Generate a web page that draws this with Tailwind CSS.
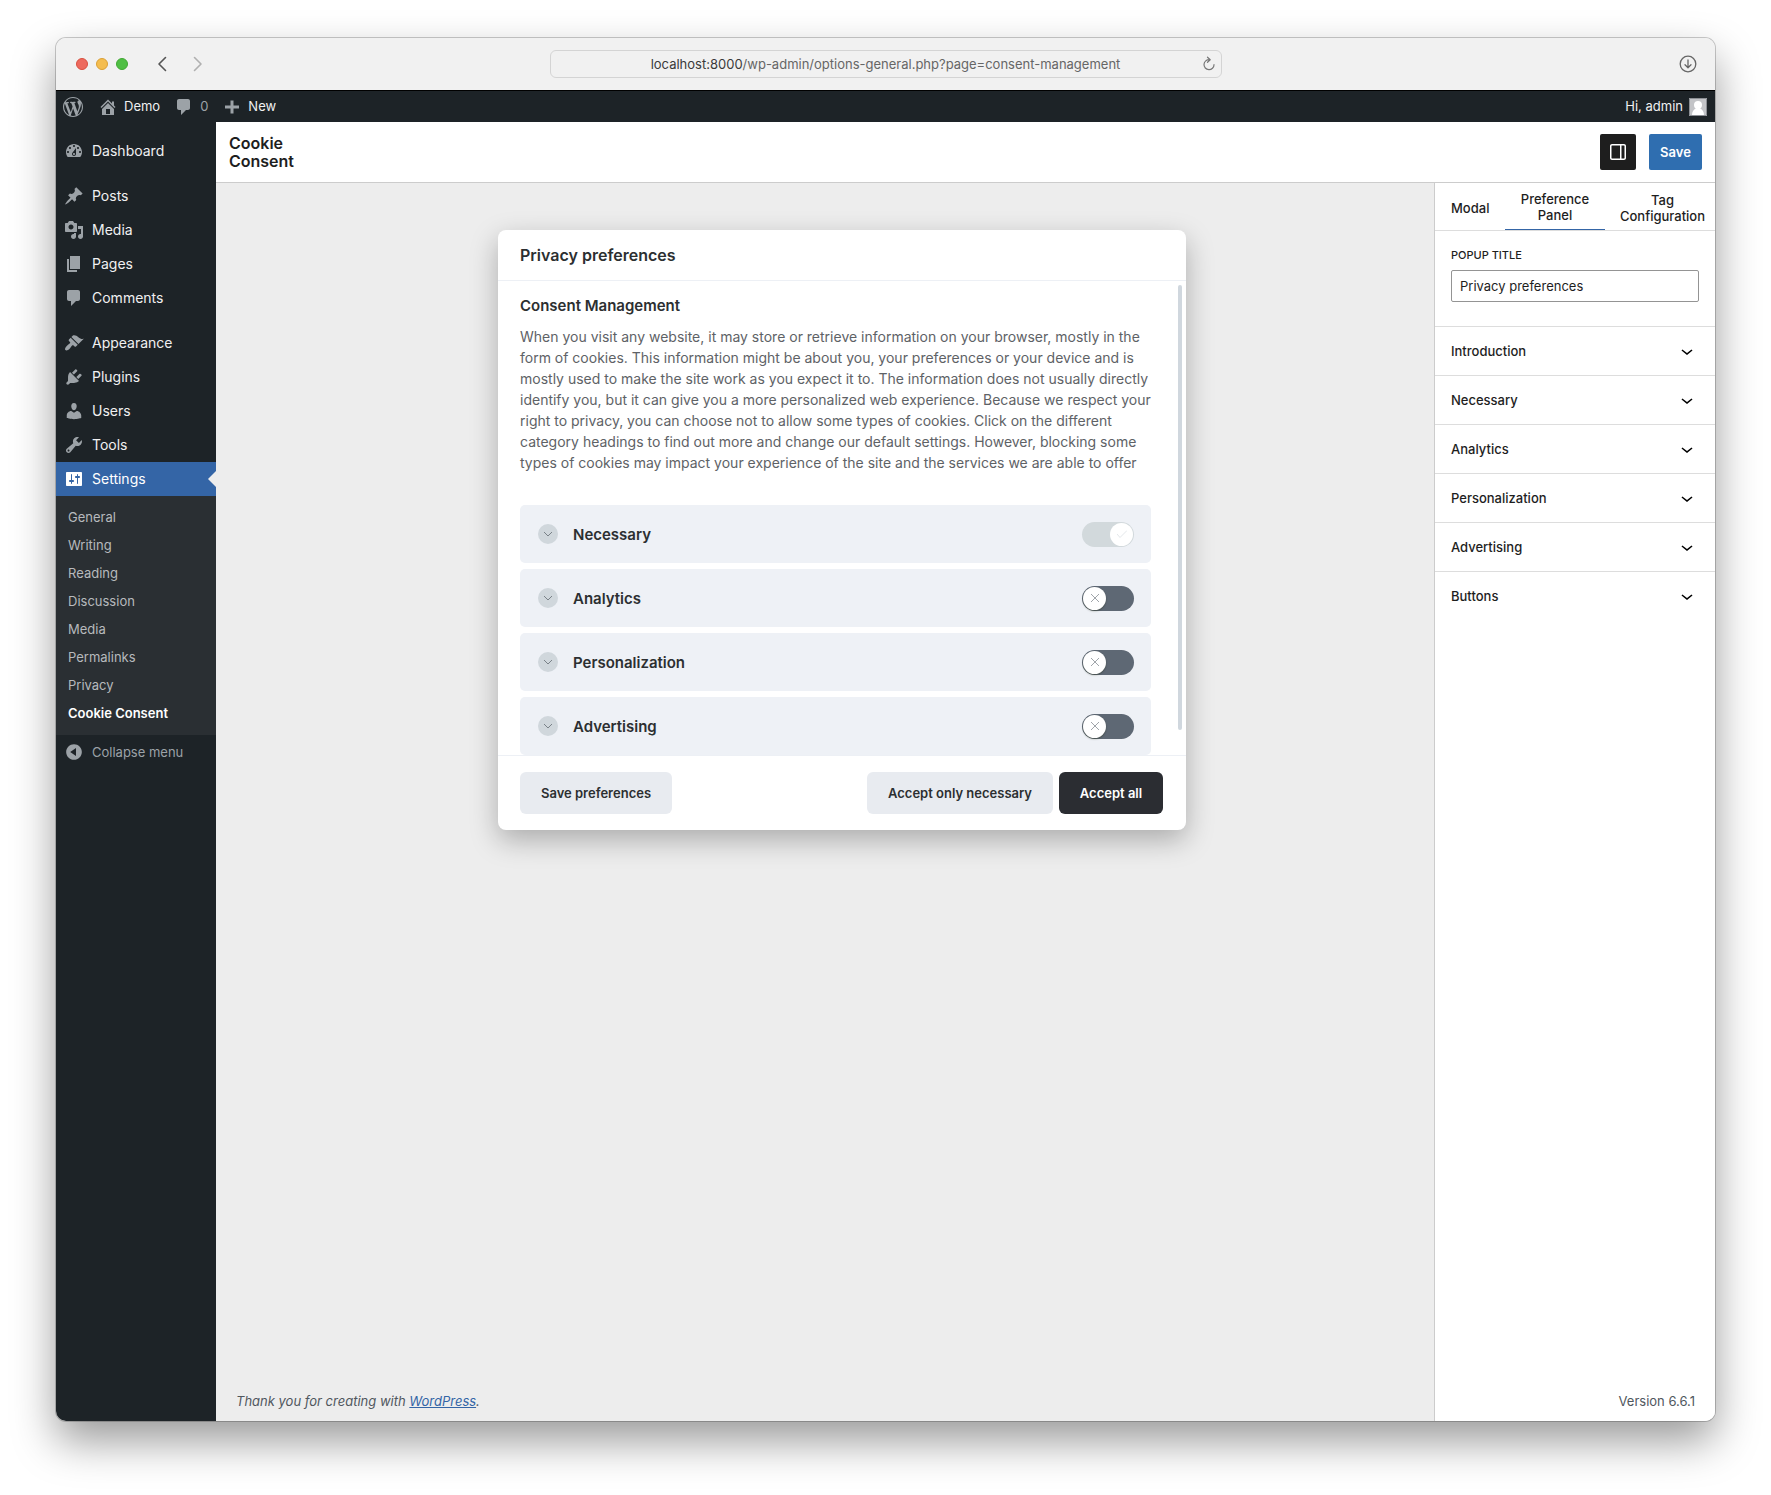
<!DOCTYPE html>
<html lang="en">
<head>
<meta charset="utf-8">
<meta name="viewport" content="width=device-width, initial-scale=1">
<title>Cookie Consent</title>
<script src="https://cdn.jsdelivr.net/npm/@tailwindcss/browser@4"></script>
</head>
<body class="bg-white font-[Inter,sans-serif] text-[13px] text-[#1e1e1e]">
<svg class="hidden" aria-hidden="true">
  <symbol id="chevron" viewBox="0 0 24 24"><path d="M17.5 11.6L12 16l-5.500-4.400.9-1.200L12 14l4.500-3.600 1 1.200z"/></symbol>
  <symbol id="comment" viewBox="0 0 20 20"><path d="M5 2h9c1.100 0 2 .9 2 2v7c0 1.100-.9 2-2 2h-2l-5 5v-5H5c-1.100 0-2-.9-2-2V4c0-1.100.9-2 2-2z"/></symbol>
  <symbol id="thin-chevron" viewBox="0 0 10 6"><path d="M1 1l4 4 4-4" fill="none" stroke="currentColor"/></symbol>
  <symbol id="cross" viewBox="0 0 10 10"><path d="M1 1l8 8M9 1l-8 8" fill="none" stroke="currentColor"/></symbol>
</svg>

<div class="flex min-h-screen flex-col px-14 pt-[38px] pb-[74px]">
<div class="flex grow flex-col overflow-hidden rounded-[10px] shadow-[0_0_0_1px_rgba(0,0,0,0.2),0_20px_44px_rgba(0,0,0,0.4)]">

  <!-- Browser toolbar -->
  <div class="grid h-[52px] grid-cols-[1fr_minmax(0,672px)_1fr] items-center bg-[#f1f1f1]">
    <div class="flex items-center pl-5">
      <div class="flex gap-2">
        <span class="size-3 rounded-full border border-[#d9503f] bg-[#ed6a5e]"></span>
        <span class="size-3 rounded-full border border-[#dba035] bg-[#f4bd4f]"></span>
        <span class="size-3 rounded-full border border-[#41a833] bg-[#4fbf44]"></span>
      </div>
      <button class="ml-7 text-[#555]" aria-label="Back"><svg class="h-4 w-3" viewBox="0 0 12 16" fill="none" stroke="currentColor" stroke-width="1.600" stroke-linecap="round" stroke-linejoin="round"><path d="M9.500 1.500L3 8l6.500 6.500" /></svg></button>
      <button class="ml-6 text-[#b0b0b0]" aria-label="Forward"><svg class="h-4 w-3" viewBox="0 0 12 16" fill="none" stroke="currentColor" stroke-width="1.600" stroke-linecap="round" stroke-linejoin="round"><path d="M2.500 1.500L9 8l-6.500 6.500"/></svg></button>
    </div>
    <div class="flex h-7 items-center rounded-md border border-[#d4d4d4] px-1">
      <p class="grow pt-0.5 pl-4 text-center text-[#666]"><span class="text-[#3a3a3a]">localhost:8000</span>/wp-admin/options-general.php?page=consent-management</p>
      <button class="text-[#777]" aria-label="Reload"><svg class="size-4" viewBox="0 0 16 16" fill="none" stroke="currentColor" stroke-width="1.200" stroke-linecap="round" stroke-linejoin="round"><path d="M8.500 3.700A5 5 0 1 0 13 8.700M6.500 1.200l2.700 2.600-2.700 2.500"/></svg></button>
    </div>
    <button class="mr-[18px] justify-self-end text-[#666]" aria-label="Downloads"><svg class="size-[18px]" viewBox="0 0 18 18" fill="none" stroke="currentColor" stroke-width="1.300" stroke-linecap="round" stroke-linejoin="round"><circle cx="9" cy="9" r="7.800"/><path d="M9 5v7.500M6 9.800l3 3 3-3"/></svg></button>
  </div>

  <!-- Admin bar -->
  <div class="flex h-8 items-center border-t border-black bg-[#1d2327] pr-2 text-[#f0f0f1]">
    <a href="#" class="ml-[7px] text-[#9ca2a7]" aria-label="WordPress"><svg class="size-5" viewBox="0 0 20 20" fill="currentColor"><path d="M20 10c0-5.510-4.490-10-10-10C4.480 0 0 4.490 0 10c0 5.520 4.480 10 10 10 5.510 0 10-4.480 10-10zM7.780 15.370L4.370 6.220c.55-.02 1.170-.08 1.170-.08.5-.06.44-1.130-.06-1.110 0 0-1.450.11-2.370.11-.18 0-.37 0-.58-.01C4.120 2.690 6.870 1.110 10 1.110c2.330 0 4.450.87 6.050 2.340-.68-.11-1.650.39-1.650 1.580 0 .74.45 1.360.9 2.100.35.61.55 1.360.55 2.460 0 1.490-1.400 5-1.400 5l-3.030-8.370c.54-.02.82-.17.82-.17.5-.05.44-1.250-.06-1.220 0 0-1.440.12-2.380.12-.87 0-2.330-.12-2.330-.12-.5-.03-.56 1.200-.06 1.220l.92.08 1.260 3.410zM17.410 10c.24-.64.74-1.870.43-4.250.7 1.290 1.050 2.710 1.050 4.250 0 3.290-1.730 6.240-4.400 7.780.97-2.590 1.940-5.200 2.920-7.780zM6.100 18.090C3.120 16.650 1.110 13.530 1.110 10c0-1.300.23-2.480.72-3.590C3.250 10.300 4.670 14.200 6.100 18.090zm4.030-6.630l2.580 6.980c-.86.29-1.760.45-2.710.45-.79 0-1.570-.11-2.290-.33.81-2.380 1.620-4.740 2.420-7.100z"/></svg></a>
    <a href="#" class="ml-[15px] flex items-center gap-1.5"><svg class="size-5 text-[#9ca2a7]" viewBox="0 0 20 20" fill="currentColor"><path d="M16 8.500l1.530 1.530-1.060 1.060L10 4.600l-6.470 6.490-1.060-1.060L10 2.500l4 4v-2h2v4zm-6-2.460l6 5.990V18H4v-5.970zM12 17v-5H8v5h4z"/></svg>Demo</a>
    <a href="#" class="ml-3.5 flex items-center gap-1.5 text-[#9ca2a7]"><svg class="size-5" fill="currentColor"><use href="#comment"/></svg>0</a>
    <a href="#" class="ml-3.5 flex items-center gap-1.5"><svg class="size-5 text-[#9ca2a7]" viewBox="0 0 20 20" fill="currentColor"><path d="M8.500 3.500h3v5H17v3h-5.500v5h-3v-5H3v-3h5.500z"/></svg>New</a>
    <a href="#" class="ml-auto flex items-center gap-1.5">Hi, admin<svg class="size-[18px]" viewBox="0 0 18 18"><path fill="#c3c4c7" d="M0 0h18v18H0z"/><path fill="#fff" d="M9 3a4 4 0 0 1 4 4c0 1.600-.8 3-1.800 3.600C13.500 11.500 15 14 15 17H3c0-3 1.500-5.500 3.800-6.400C5.800 10 5 8.600 5 7a4 4 0 0 1 4-4z"/><path fill="none" stroke="#8c8f94" d="M.5.5h17v17H.5z"/></svg></a>
  </div>

  <div class="flex grow bg-[#ededed]">
    <!-- Admin menu -->
    <nav class="w-40 shrink-0 bg-[#1d2327] pt-3 text-sm text-[#f0f0f1]" aria-label="Admin menu">
      <a href="#" class="flex h-[34px] items-center gap-2 pl-2"><svg class="size-5 text-[#9ca2a7]" viewBox="0 0 20 20" fill="currentColor"><path d="M3.760 16h12.480c1.100-1.370 1.760-3.110 1.760-5 0-4.420-3.580-8-8-8s-8 3.580-8 8c0 1.890.66 3.630 1.760 5zM10 4c.55 0 1 .45 1 1s-.45 1-1 1-1-.45-1-1 .45-1 1-1zM6 6c.55 0 1 .45 1 1s-.45 1-1 1-1-.45-1-1 .45-1 1-1zm8 0c.55 0 1 .45 1 1s-.45 1-1 1-1-.45-1-1 .45-1 1-1zm-5.370 5.550L12 7v6c0 1.100-.9 2-2 2s-2-.9-2-2c0-.57.24-1.080.63-1.450zM4 10c.55 0 1 .45 1 1s-.45 1-1 1-1-.45-1-1 .45-1 1-1zm12 0c.55 0 1 .45 1 1s-.45 1-1 1-1-.45-1-1 .45-1 1-1zm-5 3c0-.55-.45-1-1-1s-1 .45-1 1 .45 1 1 1 1-.45 1-1z"/></svg>Dashboard</a>
      <a href="#" class="mt-[11px] flex h-[34px] items-center gap-2 pl-2"><svg class="size-5 text-[#9ca2a7]" viewBox="0 0 20 20" fill="currentColor"><path d="M10.440 3.020l1.820-1.820 6.360 6.350-1.830 1.820c-1.050-.68-2.480-.57-3.410.36l-.75.75c-.92.93-1.040 2.350-.35 3.410l-1.830 1.820-2.410-2.410-2.800 2.790c-.42.42-3.380 2.710-3.800 2.290s1.860-3.390 2.280-3.810l2.790-2.790L4.100 9.360l1.830-1.820c1.050.69 2.480.57 3.400-.36l.75-.75c.93-.92 1.050-2.350.36-3.410z"/></svg>Posts</a>
      <a href="#" class="flex h-[34px] items-center gap-2 pl-2"><svg class="size-5 text-[#9ca2a7]" viewBox="0 0 20 20" fill="currentColor"><path d="M13 11V4c0-.55-.45-1-1-1h-1.670L9 1H5L3.670 3H2c-.55 0-1 .45-1 1v7c0 .55.45 1 1 1h10c.55 0 1-.45 1-1zM7 4.500c1.380 0 2.500 1.120 2.500 2.500S8.380 9.500 7 9.500 4.500 8.380 4.500 7 5.620 4.500 7 4.500zM14 6h5v10.500c0 1.380-1.120 2.500-2.500 2.500S14 17.880 14 16.500s1.120-2.500 2.500-2.500c.17 0 .34.02.5.05V9h-3V6zm-4 8.050V13h2v3.500c0 1.380-1.120 2.500-2.500 2.500S7 17.880 7 16.500 8.120 14 9.500 14c.17 0 .34.02.5.05z"/></svg>Media</a>
      <a href="#" class="flex h-[34px] items-center gap-2 pl-2"><svg class="size-5 text-[#9ca2a7]" viewBox="0 0 20 20" fill="currentColor"><path d="M6 15V2h10v13H6zm-1 1h8v2H3V5h2v11z"/></svg>Pages</a>
      <a href="#" class="flex h-[34px] items-center gap-2 pl-2"><svg class="size-5 text-[#9ca2a7]" fill="currentColor"><use href="#comment"/></svg>Comments</a>
      <a href="#" class="mt-[11px] flex h-[34px] items-center gap-2 pl-2"><svg class="size-5 text-[#9ca2a7]" viewBox="0 0 20 20" fill="currentColor"><path d="M14.480 11.060L7.410 3.990l1.500-1.500c.5-.56 2.300-.47 3.510.32 1.210.8 1.430 1.280 2.910 2.100 1.180.64 2.450 1.260 4.450.85zm-.71.71L6.700 4.700 4.930 6.470c-.39.39-.39 1.020 0 1.410l1.060 1.060c.39.39.39 1.030 0 1.420-.6.6-1.430 1.110-2.210 1.690-.35.26-.7.53-1.010.84C1.430 14.230.4 16.080 1.400 17.070c.99 1 2.840-.03 4.180-1.360.31-.31.58-.66.85-1.020.57-.78 1.080-1.610 1.690-2.210.39-.39 1.020-.39 1.410 0l1.060 1.060c.39.39 1.020.39 1.410 0z"/></svg>Appearance</a>
      <a href="#" class="flex h-[34px] items-center gap-2 pl-2"><svg class="size-5 text-[#9ca2a7]" viewBox="0 0 20 20" fill="currentColor"><path d="M13.110 4.360L9.870 7.600 8 5.730l3.240-3.240c.35-.34 1.050-.2 1.560.32.52.51.66 1.210.31 1.550zm-8 1.770l.91-1.120 9.010 9.010-1.190.84c-.71.71-2.630 1.160-3.820 1.160H6.140L4.900 17.260c-.59.59-1.540.59-2.120 0-.59-.58-.59-1.530 0-2.120l1.240-1.240v-3.880c0-1.130.4-3.190 1.090-3.890zm7.260 3.970l3.240-3.240c.34-.35 1.040-.21 1.550.31.52.51.66 1.210.31 1.550l-3.240 3.250z"/></svg>Plugins</a>
      <a href="#" class="flex h-[34px] items-center gap-2 pl-2"><svg class="size-5 text-[#9ca2a7]" viewBox="0 0 20 20" fill="currentColor"><path d="M10 9.250c-2.270 0-2.730-3.440-2.730-3.440C7 4.020 7.820 2 9.970 2c2.160 0 2.980 2.020 2.710 3.810 0 0-.41 3.440-2.680 3.440zm0 2.570L12.720 10c2.390 0 4.520 2.330 4.520 4.530v2.490s-3.650 1.130-7.240 1.130c-3.650 0-7.240-1.130-7.240-1.130v-2.490c0-2.250 1.940-4.480 4.470-4.480z"/></svg>Users</a>
      <a href="#" class="flex h-[34px] items-center gap-2 pl-2"><svg class="size-5 text-[#9ca2a7]" viewBox="0 0 20 20" fill="currentColor"><path d="M16.680 9.770c-1.340 1.340-3.300 1.670-4.950.99l-5.410 6.520c-.99.99-2.590.99-3.580 0s-.99-2.590 0-3.570l6.520-5.420c-.68-1.650-.35-3.610.99-4.950 1.280-1.280 3.120-1.620 4.720-1.060l-2.890 2.890 2.820 2.820 2.860-2.870c.53 1.580.18 3.390-1.080 4.650zM3.810 16.210c.4.39 1.040.39 1.430 0 .4-.4.4-1.040 0-1.430-.39-.4-1.030-.4-1.430 0-.39.39-.39 1.030 0 1.430z"/></svg>Tools</a>
      <a href="#" class="flex h-[34px] items-center gap-2 bg-[#3465a6] pl-2 text-white"><svg class="size-5" viewBox="0 0 20 20" fill="currentColor"><path d="M18 16V4c0-.55-.45-1-1-1H3c-.55 0-1 .45-1 1v12c0 .55.45 1 1 1h14c.55 0 1-.45 1-1zM8 11h1c.55 0 1 .45 1 1s-.45 1-1 1H8v1.500c0 .28-.22.5-.5.5s-.5-.22-.5-.5V13H6c-.55 0-1-.45-1-1s.45-1 1-1h1V5.500c0-.28.22-.5.5-.5s.5.22.5.5V11zm5-2h-1c-.55 0-1-.45-1-1s.45-1 1-1h1V5.500c0-.28.22-.5.5-.5s.5.22.5.5V7h1c.55 0 1 .45 1 1s-.45 1-1 1h-1v5.500c0 .28-.22.5-.5.5s-.5-.22-.5-.5V9z"/></svg>Settings<svg class="ml-auto h-4 w-2" viewBox="0 0 8 16" fill="#ededed"><path d="M8 0v16L0 8z"/></svg></a>
      <div class="bg-[#2a2f33] pt-[7px] pb-2 text-[13px] text-[#b7babd]">
        <a href="#" class="flex h-7 items-center pl-3">General</a>
        <a href="#" class="flex h-7 items-center pl-3">Writing</a>
        <a href="#" class="flex h-7 items-center pl-3">Reading</a>
        <a href="#" class="flex h-7 items-center pl-3">Discussion</a>
        <a href="#" class="flex h-7 items-center pl-3">Media</a>
        <a href="#" class="flex h-7 items-center pl-3">Permalinks</a>
        <a href="#" class="flex h-7 items-center pl-3">Privacy</a>
        <a href="#" class="flex h-7 items-center pl-3 font-semibold text-white" aria-current="page">Cookie Consent</a>
      </div>
      <button class="flex h-[34px] items-center gap-2 pl-2 text-[13px] text-[#9ca2a7]"><svg class="size-5" viewBox="0 0 20 20" fill="currentColor"><path d="M10 2.160c4.330 0 7.840 3.510 7.840 7.840s-3.510 7.840-7.840 7.840S2.160 14.330 2.160 10 5.710 2.160 10 2.160zm2 11.720V6.120L6.180 9.970z"/></svg>Collapse menu</button>
    </nav>

    <div class="flex min-w-0 grow flex-col">
      <header class="flex h-[61px] items-center gap-[13px] border-b border-[#ccc] bg-white px-[13px]">
        <h1 class="mr-auto w-24 text-base leading-[18px] font-semibold">Cookie Consent</h1>
        <button class="flex size-9 items-center justify-center rounded-xs bg-[#1e1e1e] text-white" aria-label="Settings panel"><svg class="size-6" viewBox="0 0 24 24" fill="currentColor"><path fill-rule="evenodd" d="M18 4H6c-1.100 0-2 .9-2 2v12c0 1.100.9 2 2 2h12c1.100 0 2-.9 2-2V6c0-1.100-.9-2-2-2zm-4 14.500H6c-.3 0-.5-.2-.5-.5V6c0-.3.2-.5.5-.5h8v13zm4.500-.5c0 .3-.2.5-.5.5h-2.500v-13H18c.3 0 .5.2.5.5v12z" clip-rule="evenodd"/></svg></button>
        <button class="h-9 w-[53px] rounded-xs bg-[#2f6eb0] pt-0.5 font-semibold text-white">Save</button>
      </header>

      <div class="flex grow">
        <main class="flex min-w-0 grow flex-col items-center pt-[47px]">
          <!-- Preferences dialog -->
          <section class="ml-[34px] w-[688px] max-w-full rounded-lg bg-white text-[#2c2f31] shadow-[0_10px_28px_rgba(2,2,3,0.28)]" aria-labelledby="dialog-title">
            <h2 id="dialog-title" class="flex h-[51px] items-center border-b border-[#edf0f5] px-[22px] text-base font-semibold">Privacy preferences</h2>
            <div class="flex">
              <div class="min-w-0 grow pt-[15px] pl-[22px]">
                <h3 class="text-[15px] leading-5 font-semibold">Consent Management</h3>
                <p class="mt-2.5 text-sm leading-[21px] text-[#5e6266]">When you visit any website, it may store or retrieve information on your browser, mostly in the form of cookies. This information might be about you, your preferences or your device and is mostly used to make the site work as you expect it to. The information does not usually directly identify you, but it can give you a more personalized web experience. Because we respect your right to privacy, you can choose not to allow some types of cookies. Click on the different category headings to find out more and change our default settings. However, blocking some types of cookies may impact your experience of the site and the services we are able to offer</p>
                <div class="mt-8 flex flex-col gap-1.5 text-[15px] font-semibold">
                  <div class="flex h-[58px] items-center rounded-[5px] bg-[#eef1f6] pr-[17px] pl-[18px]">
                    <button class="flex items-center gap-[15px]"><span class="flex size-5 items-center justify-center rounded-full bg-[#d0d7dc] text-[#7a8288]"><svg class="h-1.5 w-2.5"><use href="#thin-chevron"/></svg></span><span id="necessary" class="pt-0.5">Necessary</span></button>
                    <span class="relative ml-auto h-[25px] w-[52px]"><input type="checkbox" checked disabled aria-labelledby="necessary" class="block size-full appearance-none rounded-full bg-[#d2d9dc]"><span class="pointer-events-none absolute top-px right-px flex size-[23px] items-center justify-center rounded-full bg-white text-[#e3e7ea]"><svg class="h-2 w-2.5" viewBox="0 0 10 8" fill="none" stroke="currentColor"><path d="M0 4l3 3.500L10 .5"/></svg></span></span>
                  </div>
                  <div class="flex h-[58px] items-center rounded-[5px] bg-[#eef1f6] pr-[17px] pl-[18px]">
                    <button class="flex items-center gap-[15px]"><span class="flex size-5 items-center justify-center rounded-full bg-[#d0d7dc] text-[#7a8288]"><svg class="h-1.5 w-2.5"><use href="#thin-chevron"/></svg></span><span id="analytics" class="pt-0.5">Analytics</span></button>
                    <span class="relative ml-auto h-[25px] w-[52px]"><input type="checkbox" aria-labelledby="analytics" class="block size-full appearance-none rounded-full bg-[#5e6874]"><span class="pointer-events-none absolute top-px left-px flex size-[23px] items-center justify-center rounded-full bg-white text-[#a0a5aa] shadow-[0_1px_2px_rgba(24,32,3,0.36)]"><svg class="size-2.5"><use href="#cross"/></svg></span></span>
                  </div>
                  <div class="flex h-[58px] items-center rounded-[5px] bg-[#eef1f6] pr-[17px] pl-[18px]">
                    <button class="flex items-center gap-[15px]"><span class="flex size-5 items-center justify-center rounded-full bg-[#d0d7dc] text-[#7a8288]"><svg class="h-1.5 w-2.5"><use href="#thin-chevron"/></svg></span><span id="personalization" class="pt-0.5">Personalization</span></button>
                    <span class="relative ml-auto h-[25px] w-[52px]"><input type="checkbox" aria-labelledby="personalization" class="block size-full appearance-none rounded-full bg-[#5e6874]"><span class="pointer-events-none absolute top-px left-px flex size-[23px] items-center justify-center rounded-full bg-white text-[#a0a5aa] shadow-[0_1px_2px_rgba(24,32,3,0.36)]"><svg class="size-2.5"><use href="#cross"/></svg></span></span>
                  </div>
                  <div class="flex h-[58px] items-center rounded-[5px] bg-[#eef1f6] pr-[17px] pl-[18px]">
                    <button class="flex items-center gap-[15px]"><span class="flex size-5 items-center justify-center rounded-full bg-[#d0d7dc] text-[#7a8288]"><svg class="h-1.5 w-2.5"><use href="#thin-chevron"/></svg></span><span id="advertising" class="pt-0.5">Advertising</span></button>
                    <span class="relative ml-auto h-[25px] w-[52px]"><input type="checkbox" aria-labelledby="advertising" class="block size-full appearance-none rounded-full bg-[#5e6874]"><span class="pointer-events-none absolute top-px left-px flex size-[23px] items-center justify-center rounded-full bg-white text-[#a0a5aa] shadow-[0_1px_2px_rgba(24,32,3,0.36)]"><svg class="size-2.5"><use href="#cross"/></svg></span></span>
                  </div>
                </div>
              </div>
              <div class="flex w-[35px] shrink-0 justify-end pt-1 pr-1 pb-[25px]"><span class="w-1 rounded-full bg-[#d0d7de]"></span></div>
            </div>
            <div class="flex gap-1.5 border-t border-[#edf0f5] py-4 pr-[23px] pl-[22px] text-[13px] font-semibold">
              <button class="mr-auto h-[42px] w-[152px] rounded-md bg-[#e8ebf0] pt-0.5">Save preferences</button>
              <button class="h-[42px] w-[186px] rounded-md bg-[#e8ebf0] pt-0.5">Accept only necessary</button>
              <button class="h-[42px] w-[104px] rounded-md bg-[#2b2d32] pt-0.5 text-white">Accept all</button>
            </div>
          </section>
          <p class="mt-auto self-start pb-2.5 pl-5 leading-5 text-[#50575e] italic">Thank you for creating with <a href="#" class="text-[#3465a6] underline">WordPress</a>.</p>
        </main>

        <!-- Settings panel -->
        <aside class="flex w-[281px] shrink-0 flex-col border-l border-[#ccc] bg-white font-medium">
          <div class="flex h-12 overflow-hidden border-b border-[#ddd] leading-4" role="tablist">
            <button role="tab" class="w-[70px] shrink-0 px-4 pt-0.5">Modal</button>
            <button role="tab" aria-selected="true" class="w-[100px] shrink-0 border-b border-[#3465a6] px-2 pt-0.5">Preference Panel</button>
            <button role="tab" class="w-[115px] shrink-0 px-3 pt-0.5">Tag Configuration</button>
          </div>
          <div class="px-4 pt-4 pb-6">
            <label for="popup-title" class="block text-[11px] leading-4 uppercase">Popup title</label>
            <input id="popup-title" type="text" value="Privacy preferences" class="mt-[7px] block h-8 w-full rounded-xs border border-[#949494] px-2 text-[13px] font-normal">
          </div>
          <button class="flex h-[49px] items-center justify-between border-t border-[#ddd] px-4"><span class="pt-0.5">Introduction</span><svg class="size-6"><use href="#chevron"/></svg></button>
          <button class="flex h-[49px] items-center justify-between border-t border-[#ddd] px-4"><span class="pt-0.5">Necessary</span><svg class="size-6"><use href="#chevron"/></svg></button>
          <button class="flex h-[49px] items-center justify-between border-t border-[#ddd] px-4"><span class="pt-0.5">Analytics</span><svg class="size-6"><use href="#chevron"/></svg></button>
          <button class="flex h-[49px] items-center justify-between border-t border-[#ddd] px-4"><span class="pt-0.5">Personalization</span><svg class="size-6"><use href="#chevron"/></svg></button>
          <button class="flex h-[49px] items-center justify-between border-t border-[#ddd] px-4"><span class="pt-0.5">Advertising</span><svg class="size-6"><use href="#chevron"/></svg></button>
          <button class="flex h-[49px] items-center justify-between border-t border-[#ddd] px-4"><span class="pt-0.5">Buttons</span><svg class="size-6"><use href="#chevron"/></svg></button>
          <p class="mt-auto pr-5 pb-2.5 text-right leading-5 font-normal text-[#50575e]">Version 6.6.1</p>
        </aside>
      </div>
    </div>
  </div>
</div>
</div>
</body>
</html>
